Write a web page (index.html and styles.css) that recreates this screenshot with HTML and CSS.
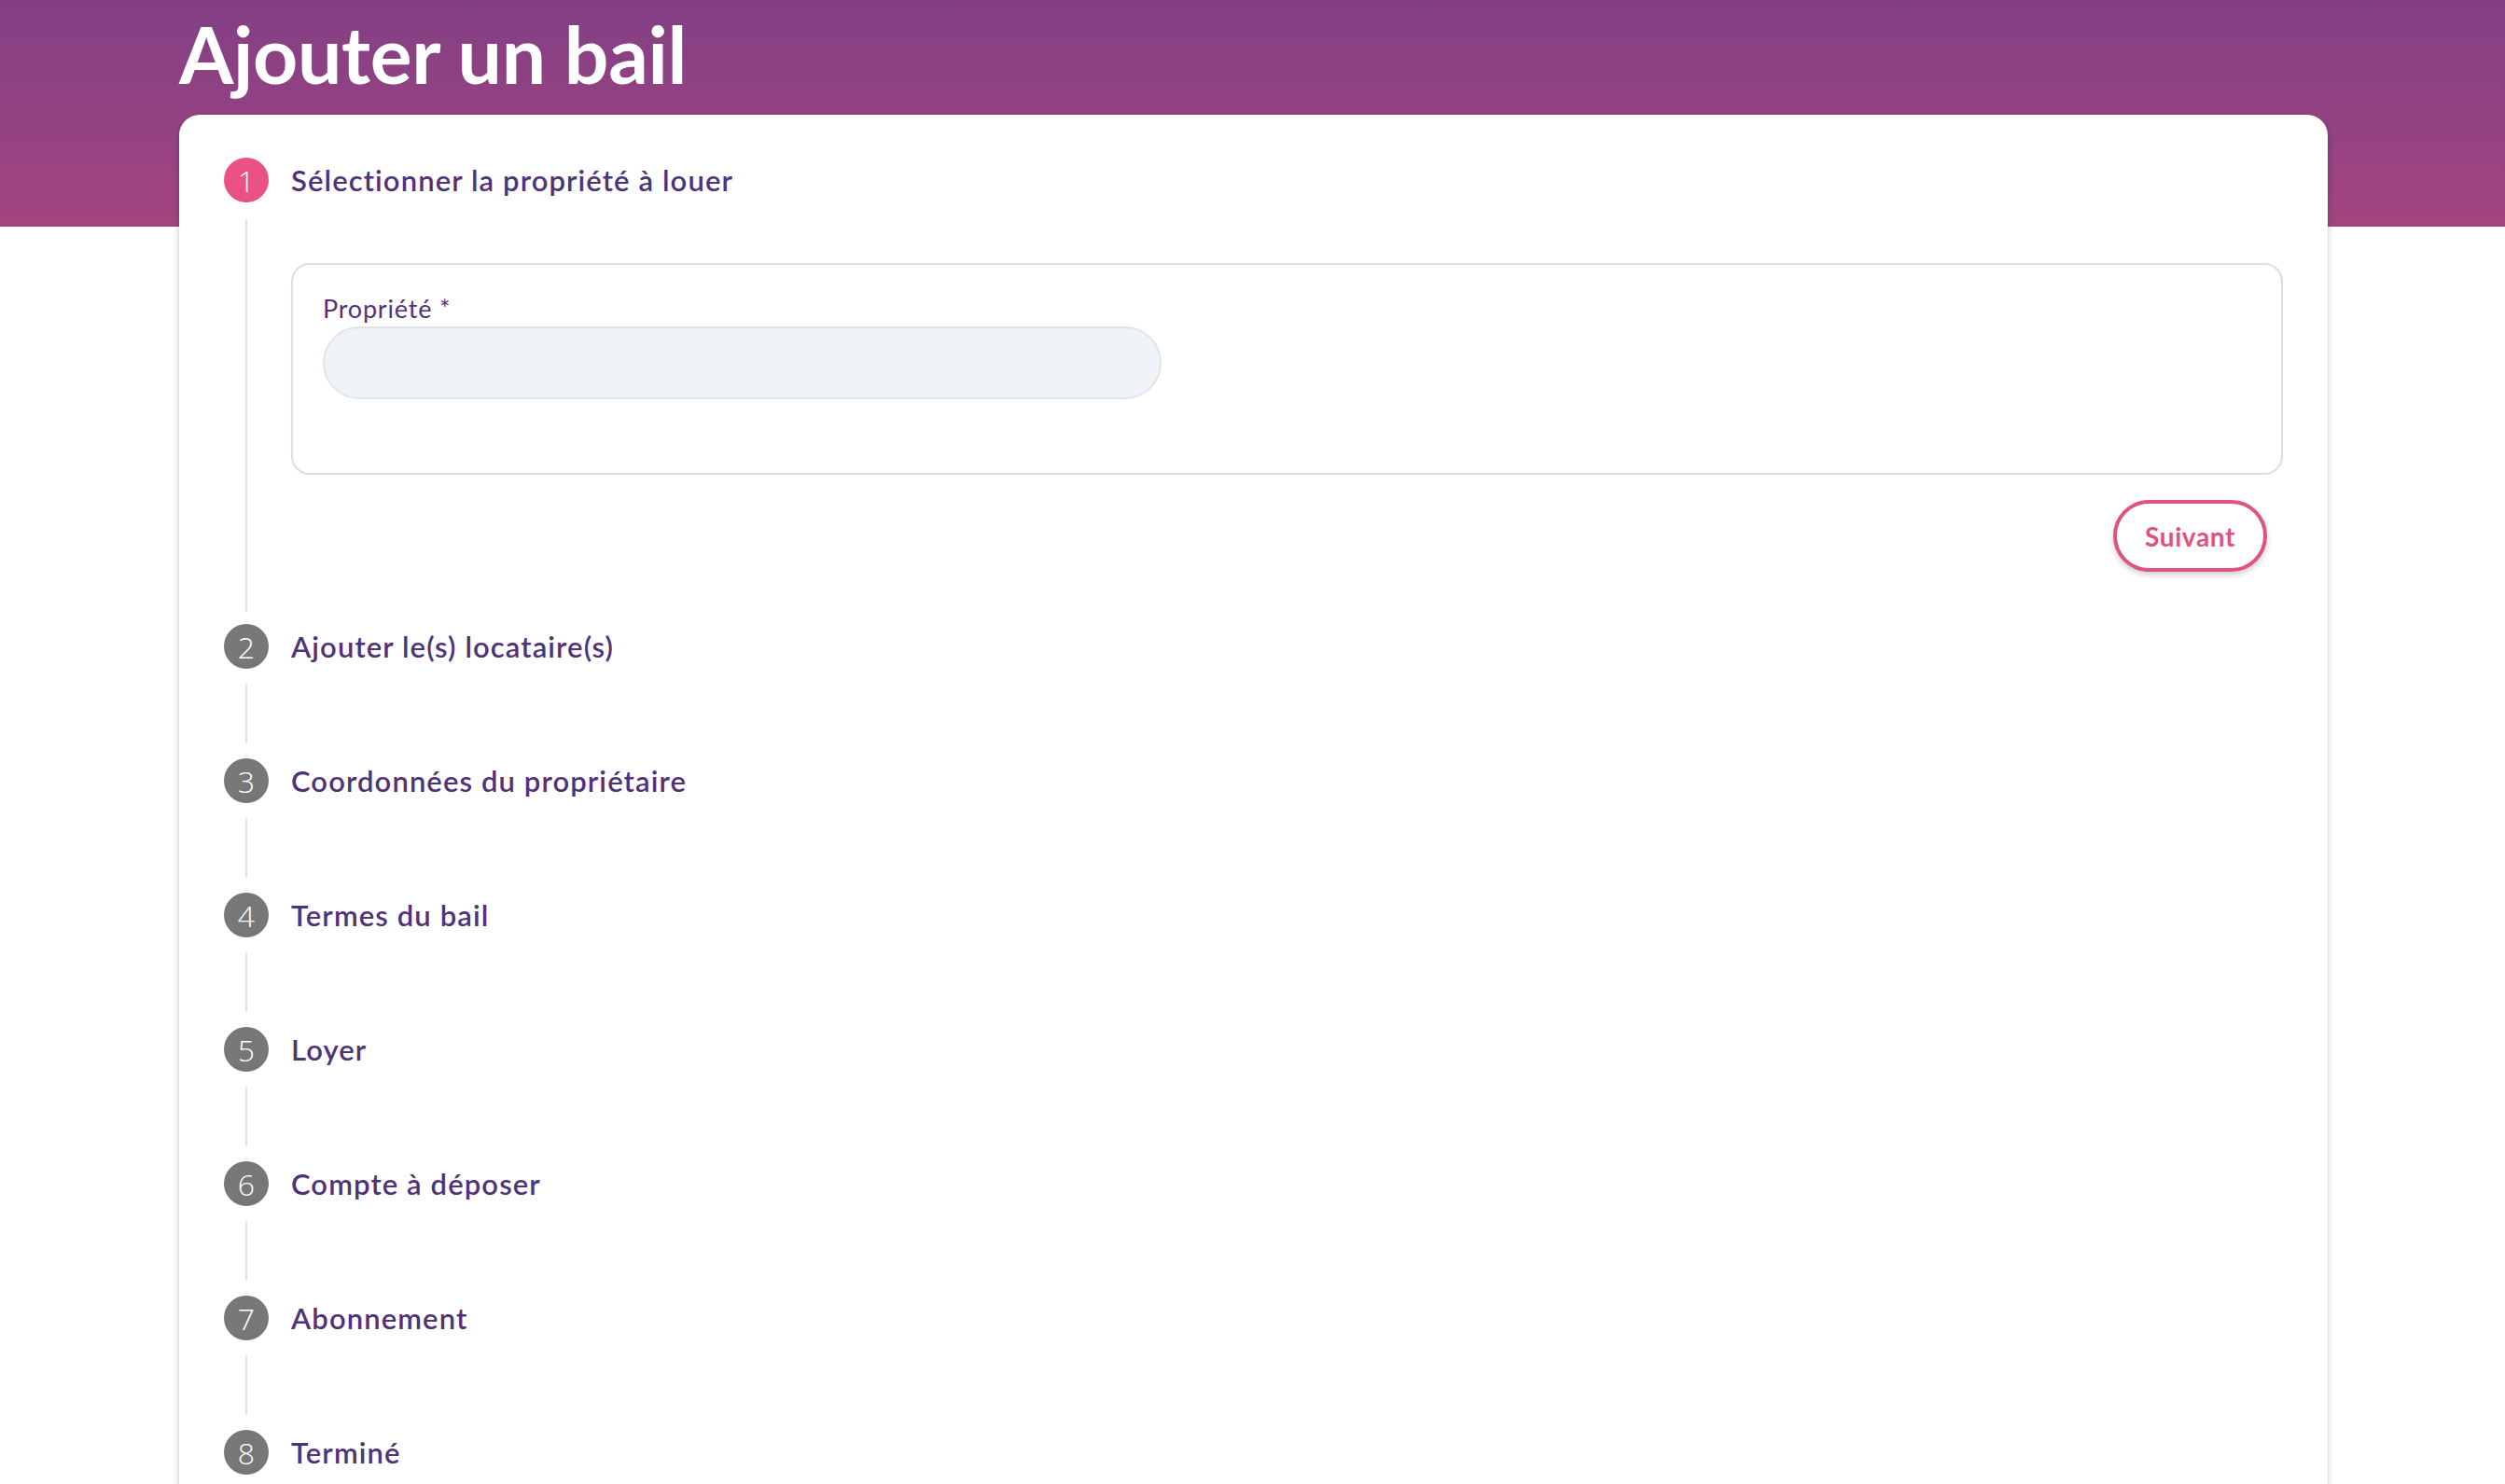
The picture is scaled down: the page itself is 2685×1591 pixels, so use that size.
FILE: index.html
```html
<!DOCTYPE html>
<html lang="fr">
<head>
<meta charset="utf-8">
<title>Ajouter un bail</title>
<link rel="stylesheet" href="styles.css">
</head>
<body>
<div class="page">
  <div class="container">
    <h1 class="title">Ajouter un bail</h1>
    <div class="card">
      <div class="step">
        <div class="step-head">
          <span class="step-num active">1</span>
          <span class="step-label">Sélectionner la propriété à louer</span>
        </div>
        <div class="step-body step-body-open">
          <div class="form-box">
            <label class="field-label">Propriété *</label>
            <div class="field-input"></div>
          </div>
          <div class="actions">
            <button class="btn-next">Suivant</button>
          </div>
        </div>
      </div>
      <div class="step">
        <div class="step-head">
          <span class="step-num">2</span>
          <span class="step-label">Ajouter le(s) locataire(s)</span>
        </div>
        <div class="step-body"></div>
      </div>
      <div class="step">
        <div class="step-head">
          <span class="step-num">3</span>
          <span class="step-label">Coordonnées du propriétaire</span>
        </div>
        <div class="step-body"></div>
      </div>
      <div class="step">
        <div class="step-head">
          <span class="step-num">4</span>
          <span class="step-label">Termes du bail</span>
        </div>
        <div class="step-body"></div>
      </div>
      <div class="step">
        <div class="step-head">
          <span class="step-num">5</span>
          <span class="step-label">Loyer</span>
        </div>
        <div class="step-body"></div>
      </div>
      <div class="step">
        <div class="step-head">
          <span class="step-num">6</span>
          <span class="step-label">Compte à déposer</span>
        </div>
        <div class="step-body"></div>
      </div>
      <div class="step">
        <div class="step-head">
          <span class="step-num">7</span>
          <span class="step-label">Abonnement</span>
        </div>
        <div class="step-body"></div>
      </div>
      <div class="step">
        <div class="step-head">
          <span class="step-num">8</span>
          <span class="step-label">Terminé</span>
        </div>
      </div>
    </div>
  </div>
</div>
</body>
</html>
```
FILE: styles.css
```css
html, body {
  margin: 0;
  padding: 0;
  background: #ffffff;
}
body {
  font-family: Lato, "Open Sans", "Liberation Sans", sans-serif;
  overflow: hidden;
}
.page {
  min-height: 1591px;
  background: linear-gradient(180deg, #833f85 0%, #a3457f 100%) 0 0 / 100% 243px no-repeat;
}
.container {
  margin: 0 190px 0 192px;
}
.title {
  margin: 0;
  height: 123px;
  box-sizing: border-box;
  padding-top: 8px;
  color: #ffffff;
  font-size: 84px;
  font-weight: 700;
  line-height: 100px;
  letter-spacing: -0.3px;
}
.card {
  background: #ffffff;
  border-radius: 22px 22px 0 0;
  box-shadow: 0 3px 8px rgba(0,0,0,0.18), 0 0 3px rgba(0,0,0,0.08);
  padding: 46px 48px 200px 48px;
  min-height: 1600px;
  box-sizing: border-box;
}
.step-head {
  display: flex;
  align-items: center;
  gap: 24px;
  height: 48px;
}
.step-num {
  width: 48px;
  height: 48px;
  border-radius: 50%;
  background: #777777;
  color: #ffffff;
  display: flex;
  align-items: center;
  justify-content: center;
  font-family: "Open Sans", Lato, sans-serif;
  font-weight: 300;
  font-size: 32px;
  flex: none;
}
.step-num.active {
  background: #ea5184;
}
.step-label {
  color: #4f3379;
  font-size: 31px;
  font-weight: 600;
  letter-spacing: 1.1px;
}
.step-body {
  margin: 16px 0 16px 23px;
  border-left: 2px solid #e2e2e2;
  height: 64px;
}
.step-body-open {
  height: auto;
  margin-top: 18px;
  margin-bottom: 13px;
  padding: 47px 0 43px 47px;
}
.form-box {
  border: 2px solid #dcdce4;
  border-radius: 20px;
  padding: 30px 32px 79px 32px;
}
.field-label {
  display: block;
  color: #4f3379;
  font-size: 27px;
  font-weight: 400;
  line-height: 34px;
  letter-spacing: 0.8px;
  margin-bottom: 2px;
}
.field-input {
  width: 895px;
  height: 74px;
  border: 2px solid #e2e4ea;
  border-radius: 40px;
  background: #eff2f7;
}
.actions {
  display: flex;
  justify-content: flex-end;
  padding-right: 17px;
  margin-top: 27px;
}
.btn-next {
  width: 165px;
  height: 77px;
  border: 4px solid #e0527f;
  border-radius: 40px;
  background: #ffffff;
  color: #e0527f;
  font-family: Lato, sans-serif;
  font-size: 28px;
  font-weight: 700;
  letter-spacing: 0.6px;
  box-shadow: 0 3px 6px rgba(0,0,0,0.2);
}
```
